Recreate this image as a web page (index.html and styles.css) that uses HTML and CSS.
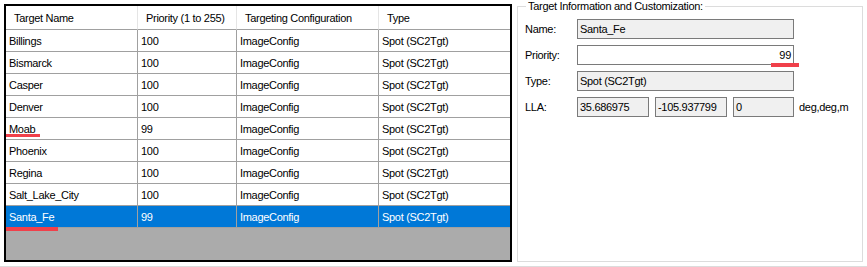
FILE: index.html
```html
<!DOCTYPE html>
<html lang="en">
<head>
    <meta charset="UTF-8">
    <title>Targets</title>
    <link rel="stylesheet" href="styles.css">
</head>
<body>
    <div class="window">
        <div class="grid-box">
            <table class="targets">
                <colgroup>
                    <col class="col-name">
                    <col class="col-priority">
                    <col class="col-config">
                    <col class="col-type">
                </colgroup>
                <thead>
                    <tr><th>Target Name</th><th>Priority (1 to 255)</th><th>Targeting Configuration</th><th>Type</th></tr>
                </thead>
                <tbody>
                    <tr><td>Billings</td><td>100</td><td>ImageConfig</td><td>Spot (SC2Tgt)</td></tr>
                    <tr><td>Bismarck</td><td>100</td><td>ImageConfig</td><td>Spot (SC2Tgt)</td></tr>
                    <tr><td>Casper</td><td>100</td><td>ImageConfig</td><td>Spot (SC2Tgt)</td></tr>
                    <tr><td>Denver</td><td>100</td><td>ImageConfig</td><td>Spot (SC2Tgt)</td></tr>
                    <tr><td class="marked">Moab<span class="mark mark-moab"></span></td><td>99</td><td>ImageConfig</td><td>Spot (SC2Tgt)</td></tr>
                    <tr><td>Phoenix</td><td>100</td><td>ImageConfig</td><td>Spot (SC2Tgt)</td></tr>
                    <tr><td>Regina</td><td>100</td><td>ImageConfig</td><td>Spot (SC2Tgt)</td></tr>
                    <tr><td>Salt_Lake_City</td><td>100</td><td>ImageConfig</td><td>Spot (SC2Tgt)</td></tr>
                    <tr class="selected"><td class="marked">Santa_Fe<span class="mark mark-santa"></span></td><td>99</td><td>ImageConfig</td><td>Spot (SC2Tgt)</td></tr>
                </tbody>
            </table>
        </div>

        <fieldset class="info">
            <legend>Target Information and Customization:</legend>
            <div class="row">
                <span class="label">Name:</span>
                <div class="field readonly wide">Santa_Fe</div>
            </div>
            <div class="row">
                <span class="label">Priority:</span>
                <div class="field wide number">99<span class="mark mark-priority"></span></div>
            </div>
            <div class="row">
                <span class="label">Type:</span>
                <div class="field readonly wide">Spot (SC2Tgt)</div>
            </div>
            <div class="row">
                <span class="label">LLA:</span>
                <div class="lla">
                    <div class="field readonly lat">35.686975</div>
                    <div class="field readonly lon">-105.937799</div>
                    <div class="field readonly alt">0</div>
                </div>
                <span class="units">deg,deg,m</span>
            </div>
        </fieldset>
    </div>
</body>
</html>
```

FILE: styles.css
```css
body { margin: 0; background: #fff; font-family: "Liberation Sans", Arial, sans-serif; font-size: 11px; letter-spacing: -0.3px; color: #000; }

.window {
    display: flex;
    align-items: flex-start;
    height: 267px;
    box-sizing: border-box;
    border-bottom: 1px solid #dcdcdc;
}

/* data grid */
.grid-box {
    margin: 4px 0 0 4px;
    width: 508px;
    height: 258px;
    box-sizing: border-box;
    border: 2px solid #000;
    background: #ababab;
    overflow: hidden;
}
.targets { border-collapse: separate; border-spacing: 0; table-layout: fixed; width: 504px; background: #fff; }
.col-name { width: 132px; }
.col-priority { width: 99px; }
.col-config { width: 142px; }
.col-type { width: 131px; }
.targets th {
    height: 23px;
    padding: 0 0 0 8px;
    text-align: left;
    font-weight: normal;
    border-right: 1px solid #e5e5e5;
    border-bottom: 1px solid #a0a0a0;
    white-space: nowrap;
}
.targets td {
    height: 21px;
    padding: 0 0 0 3px;
    border-right: 1px solid #a0a0a0;
    border-bottom: 1px solid #a0a0a0;
    white-space: nowrap;
}
.targets th:last-child, .targets td:last-child { border-right: none; }
.targets tr.selected td { background: #0078d7; color: #fff; }
.targets td.marked { position: relative; }

/* red annotation strokes */
.mark { position: absolute; height: 3px; background: #f0404a; }
.mark-moab { left: -1px; top: 16px; width: 35px; }
.mark-santa { left: -3px; top: 21px; width: 55px; height: 4px; }
.mark-priority { left: 193px; top: 17px; width: 28px; height: 4px; }

/* info group */
.info {
    margin: 0 0 0 5px;
    width: 346px;
    height: 262px;
    box-sizing: border-box;
    border: 1px solid #dcdcdc;
    padding: 6px 7px 0 7px;
}
.info legend { padding: 0 2px; margin-left: 1px; line-height: 13px; }
.row { display: flex; align-items: center; height: 20px; margin-bottom: 6px; }
.label { width: 52px; }
.field {
    height: 20px;
    box-sizing: border-box;
    border: 1px solid #7a7a7a;
    padding: 0 2px;
    line-height: 18px;
    background: #fff;
    white-space: nowrap;
    overflow: visible;
}
.field.readonly { background: #f0f0f0; }
.field.wide { width: 217px; }
.field.number { text-align: right; position: relative; }
.lla { display: flex; gap: 6px; }
.lat, .lon { width: 72px; }
.alt { width: 61px; }
.units { margin-left: 5px; }
```
